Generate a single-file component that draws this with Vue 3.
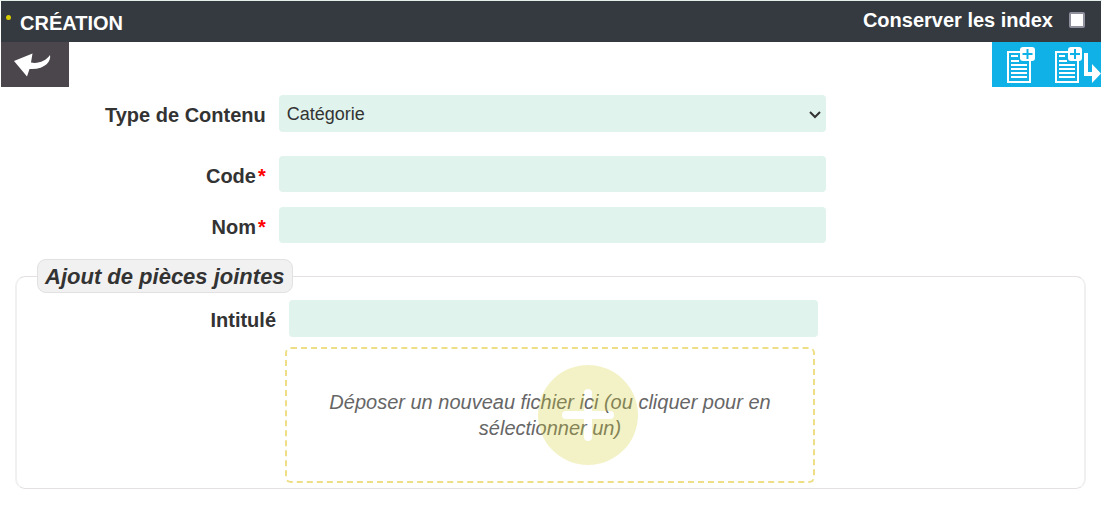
<script setup>
import { ref } from 'vue'

const keepIndexes = ref(false)
const contentType = ref('Catégorie')
const fields = ref([
  { id: 'code', label: 'Code', value: '' },
  { id: 'nom', label: 'Nom', value: '' },
])
const attachmentTitle = ref('')
</script>

<template>
  <form class="page" @submit.prevent>
    <header class="titlebar">
      <span class="dot"></span>
      <h1 class="title">CRÉATION</h1>
      <label class="keep">
        Conserver les index
        <input v-model="keepIndexes" class="check" type="checkbox" />
      </label>
    </header>

    <div class="toolbar">
      <button class="back" type="button" aria-label="Retour">
        <svg width="38" height="24" viewBox="0 0 38 24">
          <path fill="#fff" d="M0 8L18.500 0.500L17 9.500C24 11 32 8 36 2C37.500 8 31 17 15.500 16L13 23.500Z" />
        </svg>
      </button>
      <div class="actions">
        <button class="action" type="submit" aria-label="Créer">
          <svg width="30" height="38" viewBox="0 0 30 38">
            <path fill="none" stroke="#fff" stroke-width="2" d="M15 6H3V36H25V14" />
            <path stroke="#fff" stroke-width="2" d="M6 10h7M6 15h8M6 19h16M6 23h16M6 27h16M6 31h16" />
            <rect x="15" y="1" width="15" height="14" rx="3" fill="#fff" />
            <path stroke="#10b1e6" stroke-width="2" d="M22.500 3v10M17.500 8h10" />
          </svg>
        </button>
        <button class="action" type="button" aria-label="Créer et continuer">
          <svg width="48" height="38" viewBox="0 0 48 38">
            <path fill="none" stroke="#fff" stroke-width="2" d="M15 6H3V36H25V14" />
            <path stroke="#fff" stroke-width="2" d="M6 10h6M6 15h8M6 19h16M6 23h16M6 27h16M6 31h16" />
            <rect x="15" y="1" width="14" height="14" rx="3" fill="#fff" />
            <path stroke="#10b1e6" stroke-width="2" d="M22 3v10M17 8h10" />
            <path fill="none" stroke="#fff" stroke-width="4" d="M33 7V28H40" />
            <path fill="#fff" d="M39 18L48 27.500L39 37Z" />
          </svg>
        </button>
      </div>
    </div>

    <div class="row type-row">
      <label class="label" for="type">Type de Contenu</label>
      <div class="select-box">
        <select id="type" v-model="contentType" class="control select">
          <option>Catégorie</option>
        </select>
        <svg class="chevron" width="12" height="8" viewBox="0 0 12 8">
          <path fill="none" stroke="#333" stroke-width="2" d="M1 1L6 6L11 1" />
        </svg>
      </div>
    </div>

    <div v-for="field in fields" :key="field.id" class="row">
      <label class="label" :for="field.id">{{ field.label }}<span class="required">*</span></label>
      <input :id="field.id" v-model="field.value" class="control" type="text" required />
    </div>

    <fieldset class="attachments">
      <legend class="legend">Ajout de pièces jointes</legend>
      <div class="file-row">
        <label class="label" for="intitule">Intitulé</label>
        <input id="intitule" v-model="attachmentTitle" class="control" type="text" />
      </div>
      <div class="drop-row">
        <label class="dropzone">
          <span>Déposer un nouveau fichier ici (ou cliquer pour en sélectionner un)</span>
          <input class="file" type="file" />
          <svg class="plus" width="100" height="100" viewBox="0 0 100 100">
            <path
              fill="#d4d133"
              fill-opacity="0.28"
              fill-rule="evenodd"
              d="M50 0A50 50 0 1 1 50 100A50 50 0 1 1 50 0Z
                 M46 28V46H28A4 4 0 0 0 28 54H46V72A4 4 0 0 0 54 72V54H72A4 4 0 0 0 72 46H54V28A4 4 0 0 0 46 28Z"
            />
          </svg>
        </label>
      </div>
    </fieldset>
  </form>
</template>

<style>
body {
  margin: 0;
  background: #fff;
}
</style>

<style scoped>
.page {
  font-family: "Liberation Sans", Arial, sans-serif;
  font-size: 20px;
  line-height: 26px;
  color: #333;
  padding: 0 1px;
  border-top: 1px solid #e4efec;
}

.page *,
.page {
  box-sizing: border-box;
}

.titlebar {
  display: flex;
  align-items: center;
  height: 41px;
  padding: 0 16px 0 5px;
  background: #343a40;
  color: #fff;
}

.dot {
  width: 5px;
  height: 5px;
  margin: 0 9px 8px 0;
  border-radius: 50%;
  background: #d8cc00;
}

.title {
  flex: 1;
  margin: 2px 0 0;
  font-size: 20px;
}

.keep {
  display: flex;
  align-items: center;
  gap: 16px;
  margin-bottom: 3px;
  font-weight: bold;
}

.check {
  appearance: none;
  width: 16px;
  height: 16px;
  margin: 0;
  border: 2px solid #8f8f9d;
  border-radius: 2px;
  background: #fff;
}

.check:checked {
  background: #10b1e6;
}

.toolbar {
  display: flex;
  justify-content: space-between;
  height: 45px;
  margin-bottom: 8px;
}

.back,
.action {
  display: flex;
  padding: 0;
  border: 0;
  background: none;
}

.back {
  width: 68px;
  padding: 11px 0 0 13px;
  background: #4b464c;
}

.actions {
  display: flex;
  gap: 18px;
  padding: 4px 0 0 13px;
  background: #10b1e6;
}

.row,
.file-row,
.drop-row {
  display: grid;
}

.row {
  grid-template-columns: 278fr 548fr 275fr;
  margin-bottom: 15px;
}

.type-row {
  margin-bottom: 24px;
}

.label {
  padding: 7px 13px 0 0;
  text-align: right;
  font-weight: bold;
}

.required {
  margin-left: 2px;
  color: #f00;
}

.control {
  width: 100%;
  height: 36px;
  padding: 0 8px;
  border: 0;
  border-radius: 4px;
  background: #e0f3ec;
  color: #333;
  font: 18px "Liberation Sans", Arial, sans-serif;
}

.select-box {
  position: relative;
}

.select {
  display: block;
  height: 37px;
  appearance: none;
}

.chevron {
  position: absolute;
  top: 16px;
  right: 5px;
  pointer-events: none;
}

.attachments {
  min-width: 0;
  margin: 16px 15px 0 14px;
  padding: 0 0 5px;
  border: solid #e4e0e3;
  border-width: 1px 2px;
  border-right-color: #f0f0f0;
  border-left-color: #f0f0f0;
  border-radius: 10px;
}

.legend {
  margin-left: 20px;
  padding: 5px 7px 3px;
  border: 1px solid #e2e0e2;
  border-radius: 9px;
  background: #f1f1f1;
  font-size: 22px;
  font-weight: bold;
  font-style: italic;
  line-height: 24px;
}

.file-row {
  grid-template-columns: 272fr 529fr 266fr;
  padding-top: 7px;
  margin-bottom: 10px;
}

.file-row .control {
  height: 37px;
}

.drop-row {
  grid-template-columns: 268fr 530fr 269fr;
}

.dropzone {
  grid-column: 2;
  position: relative;
  display: flex;
  align-items: center;
  justify-content: center;
  height: 136px;
  padding: 0 36px;
  border: 2px dashed #eedf86;
  border-radius: 6px;
  color: #666;
  font-style: italic;
  text-align: center;
}

.file {
  position: absolute;
  width: 1px;
  height: 1px;
  opacity: 0;
}

.plus {
  position: absolute;
  top: calc(50% - 50px);
  left: calc(50% - 12px);
}
</style>
